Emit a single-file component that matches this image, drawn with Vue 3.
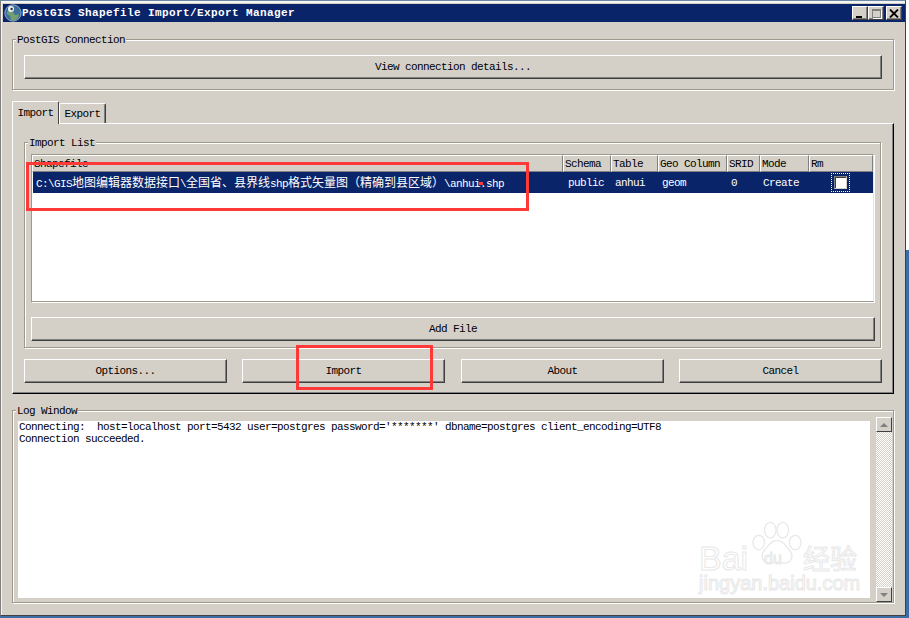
<script setup>
const columns = [
  { name: 'Shapefile', width: 531 },
  { name: 'Schema', width: 48 },
  { name: 'Table', width: 47 },
  { name: 'Geo Column', width: 69 },
  { name: 'SRID', width: 33 },
  { name: 'Mode', width: 49 },
  { name: 'Rm', width: 64 }
]
const cells = [
  { text: 'public', width: 47 },
  { text: 'anhui', width: 47 },
  { text: 'geom', width: 69 },
  { text: '0', width: 32 },
  { text: 'Create', width: 49 }
]
const pathParts = [
  { text: 'C:\\GIS', cjk: false },
  { text: '地图编辑器数据接口', cjk: true },
  { text: '\\', cjk: false },
  { text: '全国省、县界线', cjk: true },
  { text: 'shp', cjk: false },
  { text: '格式矢量图（精确到县区域）', cjk: true },
  { text: '\\anhui.shp', cjk: false }
]
const actions = ['Options...', 'Import', 'About', 'Cancel']
</script>

<template>
  <div class="screen">
    <div class="window">
      <header class="titlebar">
        <svg class="globe" width="18" height="18" viewBox="0 0 18 18">
          <circle cx="9" cy="9" r="8.2" fill="#3f6f9c" stroke="#a9bccd" stroke-width="0.8"/>
          <path d="M3 8c2-2 4-1 6 0l2 3 4-1-1 4-4 3-3-1-1-4-3-2z" fill="#6f9f72"/>
          <circle cx="7" cy="5" r="3" fill="#eef2f4"/>
          <circle cx="7.6" cy="5" r="1.2" fill="#23384f"/>
        </svg>
        <span class="title">PostGIS Shapefile Import/Export Manager</span>
        <div class="controls">
          <span class="ctl"><i class="min"></i></span>
          <span class="ctl disabled"><i class="max"></i></span>
          <span class="ctl close">
            <svg width="10" height="9" viewBox="0 0 10 9"><path d="M1 0.5L9 8.5M9 0.5L1 8.5" stroke="#000" stroke-width="1.8" fill="none"/></svg>
          </span>
        </div>
      </header>

      <main class="body">
        <section class="group connection">
          <div class="legend">PostGIS Connection</div>
          <button class="btn wide">View connection details...</button>
        </section>

        <div class="tabs">
          <span class="tab active">Import</span>
          <span class="tab">Export</span>
        </div>
        <section class="pane">
          <div class="group import-list">
            <div class="legend">Import List</div>
            <div class="list">
              <div class="list-head">
                <span v-for="c in columns" :key="c.name" class="th" :style="{ width: c.width + 'px' }">{{ c.name }}</span>
              </div>
              <div class="row">
                <span class="path"><span v-for="p in pathParts" :key="p.text" :class="{ cjk: p.cjk }">{{ p.text }}</span></span>
                <span v-for="c in cells" :key="c.text" class="td" :style="{ width: c.width + 'px' }">{{ c.text }}</span>
                <span class="rm"><span class="focus"><i class="check"></i></span></span>
              </div>
            </div>
            <button class="btn add">Add File</button>
          </div>
          <div class="actions">
            <button v-for="a in actions" :key="a" class="btn action">{{ a }}</button>
          </div>
        </section>

        <section class="group log">
          <div class="legend">Log Window</div>
          <div class="log-inner">
            <pre class="log-text">Connecting:  host=localhost port=5432 user=postgres password='*******' dbname=postgres client_encoding=UTF8
Connection succeeded.</pre>
            <div class="scroll">
              <span class="arrow"><i class="up"></i></span>
              <span class="track"></span>
              <span class="arrow"><i class="down"></i></span>
            </div>
          </div>
        </section>
      </main>

      <div class="mark mark-a"></div>
      <div class="mark mark-b"></div>
      <div class="mark-dot"></div>

      <div class="watermark">
        <svg class="paw" width="50" height="47" viewBox="0 0 52 48" fill="#fff" stroke="#e8e8e8" stroke-width="1.3">
          <ellipse cx="19" cy="9" rx="6" ry="8"/>
          <ellipse cx="32" cy="9" rx="6" ry="8"/>
          <ellipse cx="7" cy="22" rx="6" ry="7.5"/>
          <ellipse cx="45" cy="22" rx="6" ry="7.5"/>
          <path d="M26 20c7 0 9 6 13 10 5 5 2 14-6 13-3 0-5-1-7-1s-4 1-7 1c-8 1-11-8-6-13 4-4 6-10 13-10z"/>
        </svg>
        <span class="wm wm-bai">Bai</span>
        <span class="wm wm-du">du</span>
        <span class="wm wm-cn">经验</span>
        <span class="wm wm-url">jingyan.baidu.com</span>
      </div>
    </div>
  </div>
</template>

<style>
html, body { margin: 0; background: #fff; }
</style>

<style scoped>
.screen {
  width: 909px;
  height: 618px;
  overflow: hidden;
  background: linear-gradient(#fff 250px, #3a6ea5 250px);
  font-family: "Liberation Mono", "Noto Sans CJK SC", monospace;
  font-size: 11px;
  letter-spacing: -0.6px;
  color: #000;
}
.window {
  position: relative;
  box-sizing: border-box;
  width: 906px;
  height: 616px;
  padding: 3px 0 0 2px;
  background: #d4d0c8;
  border-top: 1px solid #6a8aa8;
  border-left: 1px solid #808080;
  border-right: 1px solid #404040;
  border-bottom: 1px solid #404040;
  box-shadow: inset 1px 2px 0 #f4f4f2;
}
.titlebar {
  display: flex;
  align-items: center;
  height: 18px;
  background: #0a246a;
  color: #fff;
}
.globe { margin-left: 1px; flex: none; }
.title {
  font-weight: 700;
  font-size: 11px;
  letter-spacing: 0.4px;
}
.controls { margin-left: auto; display: flex; margin-right: 3px; }
.ctl {
  box-sizing: border-box;
  width: 16px;
  height: 14px;
  background: #d4d0c8;
  border: 1px solid;
  border-color: #fff #404040 #404040 #fff;
  box-shadow: inset -1px -1px 0 #808080;
  display: flex;
  align-items: center;
  justify-content: center;
}
.ctl.close { margin-left: 2px; }
.ctl .min { width: 6px; height: 2px; background: #000; margin: 7px 3px 0 0; }
.ctl .max { box-sizing: border-box; width: 9px; height: 9px; border: 1px solid #808080; border-top-width: 2px; box-shadow: 1px 1px 0 #fff; }
.body { padding: 0 11px 0 9px; }

.group {
  box-sizing: border-box;
  border: 1px solid #9d9a8c;
  box-shadow: inset 1px 1px 0 #fff, 1px 1px 0 #fff;
}
.legend {
  width: fit-content;
  height: 12px;
  line-height: 12px;
  margin: -6px 0 0 3px;
  padding: 0 1px;
  background: #d4d0c8;
  white-space: nowrap;
}
.btn {
  display: block;
  box-sizing: border-box;
  height: 24px;
  padding: 0;
  background: #d4d0c8;
  border: 0;
  border-top: 1px solid #fff;
  border-left: 1px solid #fff;
  border-right: 1px solid #404040;
  border-bottom: 1px solid #404040;
  box-shadow: inset -1px -1px 0 #808080;
  font: inherit;
  letter-spacing: inherit;
  color: #000;
  text-align: center;
  line-height: 22px;
}
.connection { height: 51px; margin-top: 17px; }
.wide { width: 858px; margin: 9px 0 0 11px; }

.tabs { display: flex; align-items: flex-end; height: 23px; margin-top: 10px; }
.tab {
  box-sizing: border-box;
  width: 47px;
  height: 20px;
  line-height: 21px;
  text-align: center;
  background: #d4d0c8;
  border: 1px solid;
  border-color: #fff #404040 #d4d0c8 #fff;
  border-bottom: 0;
  border-radius: 2px 2px 0 0;
  box-shadow: inset -1px 0 0 #808080;
}
.tab.active {
  height: 23px;
  position: relative;
  z-index: 1;
  margin-bottom: -1px;
  line-height: 22px;
  box-shadow: none;
  border-right-color: #404040;
}
.pane {
  box-sizing: border-box;
  height: 271px;
  border: 1px solid;
  border-color: #fff #000 #000 #fff;
  box-shadow: inset -1px -1px 0 #808080;
  padding: 18px 12px 0 11px;
}
.import-list { height: 206px; }
.list {
  box-sizing: border-box;
  width: 843px;
  height: 148px;
  margin: 5px 0 0 6px;
  background: #fff;
  border: 1px solid #9d9a8c;
  border-right-color: #e8e6df;
  box-shadow: 1px 1px 0 #fff;
}
.list-head { display: flex; height: 17px; }
.th {
  box-sizing: border-box;
  flex: none;
  height: 17px;
  line-height: 16px;
  padding-left: 1px;
  background: #d4d0c8;
  border: 1px solid;
  border-color: #fff #808080 #808080 #fff;
  overflow: hidden;
  white-space: nowrap;
}
.row {
  display: flex;
  align-items: center;
  width: 840px;
  height: 21px;
  margin-left: 1px;
  color: #fff;
  background: #0a246a;
  white-space: nowrap;
}
.path {
  flex: none;
  width: 533px;
  padding-left: 3px;
  box-sizing: border-box;
  line-height: 16px;
}
.cjk {
  font-family: "Noto Sans CJK SC", sans-serif;
  font-size: 12px;
  letter-spacing: 0;
}
.td { flex: none; box-sizing: border-box; padding-left: 2px; }
.rm { flex: 1; display: flex; justify-content: center; padding-right: 2px; }
.focus {
  box-sizing: border-box;
  width: 19px;
  height: 19px;
  border: 1px dotted #fff;
  display: flex;
  align-items: center;
  justify-content: center;
}
.check {
  box-sizing: border-box;
  width: 13px;
  height: 13px;
  background: #fff;
  border: 1px solid;
  border-color: #808080 #d4d0c8 #d4d0c8 #808080;
  box-shadow: inset 1px 1px 0 #404040;
}
.add { width: 844px; margin: 15px 0 0 6px; height: 24px; }
.actions { display: flex; gap: 15px; margin-top: 11px; }
.action { flex: none; width: 203px; }
.actions .action:nth-child(3) { margin-left: 1px; }

.log { height: 193px; margin-top: 16px; }
.log-inner { display: flex; align-items: flex-start; }
.log-text {
  box-sizing: border-box;
  flex: none;
  width: 852px;
  height: 177px;
  margin: 4px 6px 0 5px;
  padding: 0 0 0 1px;
  background: #fff;
  font: inherit;
  letter-spacing: inherit;
  line-height: 12px;
  white-space: pre;
}
.scroll {
  display: flex;
  flex-direction: column;
  width: 16px;
  height: 185px;
}
.arrow {
  box-sizing: border-box;
  flex: none;
  height: 15px;
  background: #d4d0c8;
  border: 1px solid;
  border-color: #fff #404040 #404040 #fff;
  display: flex;
  align-items: center;
  justify-content: center;
}
.arrow i { width: 0; height: 0; border-left: 4px solid transparent; border-right: 4px solid transparent; }
.arrow .up { border-bottom: 4px solid #808080; }
.arrow .down { border-top: 4px solid #808080; }
.track {
  flex: 1;
  background-color: #fff;
  background-image: conic-gradient(#d4d0c8 25%, #fff 0 50%, #d4d0c8 0 75%, #fff 0);
  background-size: 2px 2px;
}

.mark { position: absolute; box-sizing: border-box; border: 3px solid #ff3838; pointer-events: none; }
.mark-a { left: 25px; top: 161px; width: 503px; height: 49px; }
.mark-b { left: 295px; top: 344px; width: 137px; height: 45px; }
.mark-dot { position: absolute; left: 478px; top: 181px; width: 4px; height: 3px; background: #ff3838; }

.watermark { position: absolute; left: 689px; top: 514px; width: 210px; height: 90px; }
.paw { position: absolute; left: 62px; top: 6px; }
.wm {
  position: absolute;
  color: #fff;
  -webkit-text-stroke: 1px #e8e8e8;
  font-family: "Liberation Sans", "Noto Sans CJK SC", sans-serif;
  letter-spacing: 0;
  white-space: nowrap;
}
.wm-bai { left: 9px; top: 28px; font-size: 34px; line-height: 30px; }
.wm-du { left: 74px; top: 36px; font-size: 16px; line-height: 16px; }
.wm-cn { left: 113px; top: 29px; font-size: 27px; line-height: 27px; font-family: "Noto Sans CJK SC", sans-serif; }
.wm-url { left: 9px; top: 58px; font-size: 20px; line-height: 20px; }
</style>
